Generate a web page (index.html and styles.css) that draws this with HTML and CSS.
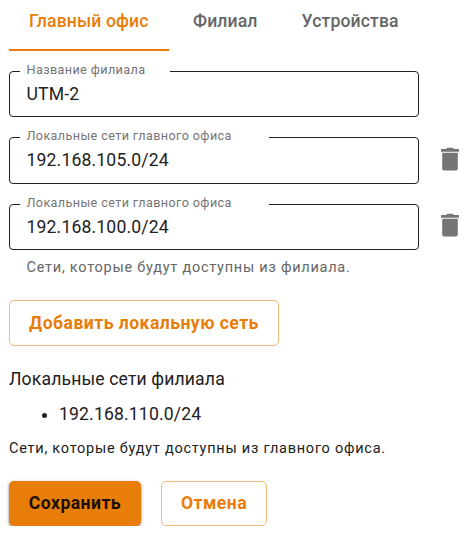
FILE: index.html
```html
<!DOCTYPE html>
<html lang="ru">
<head>
<meta charset="utf-8">
<title>Главный офис</title>
<link rel="stylesheet" href="styles.css">
</head>
<body>
<nav class="tabs">
  <a class="tab tab-active">Главный офис</a>
  <a class="tab">Филиал</a>
  <a class="tab">Устройства</a>
</nav>
<main class="form">
  <div class="row">
    <fieldset class="field field-name">
      <legend>Название филиала</legend>
      <div class="value">UTM-2</div>
    </fieldset>
  </div>
  <div class="row">
    <fieldset class="field field-tall">
      <legend>Локальные сети главного офиса</legend>
      <div class="value">192.168.105.0/24</div>
    </fieldset>
    <svg class="trash" viewBox="0 0 18 24"><path d="M0 2.1h5l1.3-1.3h5.4L13 2.1h5v2.6H0zM1.2 5.8h15.6v15.2a2.6 2.6 0 0 1-2.6 2.6H3.8A2.6 2.6 0 0 1 1.2 21z"/></svg>
  </div>
  <div class="row">
    <fieldset class="field">
      <legend>Локальные сети главного офиса</legend>
      <div class="value">192.168.100.0/24</div>
    </fieldset>
    <svg class="trash trash-last" viewBox="0 0 18 24"><path d="M0 2.1h5l1.3-1.3h5.4L13 2.1h5v2.6H0zM1.2 5.8h15.6v15.2a2.6 2.6 0 0 1-2.6 2.6H3.8A2.6 2.6 0 0 1 1.2 21z"/></svg>
  </div>
  <p class="hint">Сети, которые будут доступны из филиала.</p>
  <button class="btn btn-add">Добавить локальную сеть</button>
  <h2 class="title">Локальные сети филиала</h2>
  <ul class="nets"><li>192.168.110.0/24</li></ul>
  <p class="note">Сети, которые будут доступны из главного офиса.</p>
  <div class="actions">
    <button class="btn btn-save">Сохранить</button>
    <button class="btn btn-cancel">Отмена</button>
  </div>
</main>
</body>
</html>
```
FILE: styles.css
```css
* { box-sizing: border-box; }
body {
  margin: 0;
  background: #fff;
  color: #212121;
  font: 400 17.6px/24px Roboto, sans-serif;
  white-space: nowrap;
  overflow: hidden;
}
.tabs { display: flex; padding-left: 9px; height: 51px; }
.tab {
  padding: 9px 20px 0;
  height: 51px;
  font-weight: 500;
  letter-spacing: .14px;
  color: #666;
  border-bottom: 2px solid transparent;
}
.tab-active { width: 160px; color: #e87d0a; border-color: #e87d0a; }
.tab + .tab { padding-left: 24px; }
.form { padding: 13px 0 0 9px; }
.row { display: flex; align-items: flex-start; margin-bottom: 13px; }
.field {
  width: 410px;
  height: 53px;
  margin: 0;
  padding: 0 17px;
  border: 1px solid #212121;
  border-radius: 4px;
}
.field-tall { height: 54px; }
.field legend {
  width: 249px;
  height: 15px;
  margin-left: -7px;
  padding: 0 6.5px;
  font-size: 12.6px;
  line-height: 11px;
  letter-spacing: .4px;
  color: #757575;
}
.field-name legend { width: 150px; }
.value { line-height: 24px; margin: 3px 0 0 -.5px; letter-spacing: .15px; }
.trash { width: 18px; height: 24px; margin: 17px 0 0 22px; fill: #757575; }
.trash-last { margin-top: 16px; }
.hint {
  margin: -5px 0 22px 17.5px;
  font-size: 14.5px;
  line-height: 20px;
  letter-spacing: .75px;
  color: #666;
}
.btn {
  height: 46px;
  padding: 0;
  border: 1px solid #f4b878;
  border-radius: 5px;
  background: #fff;
  color: #e87d0a;
  font: 700 17.6px/24px Roboto, sans-serif;
  letter-spacing: .45px;
}
.btn-add { display: block; width: 270px; }
.title { margin: 21px 0 11px; font-size: 17.6px; line-height: 24px; font-weight: 400; letter-spacing: .14px; }
.nets { margin: 0 0 13px; padding-left: 50px; letter-spacing: .15px; }
.note { margin: 0 0 22px; font-size: 14.5px; line-height: 20px; letter-spacing: .75px; }
.actions { display: flex; gap: 20px; }
.btn-save {
  width: 132px;
  height: 45px;
  padding-bottom: 1px;
  border: 0;
  background: #e87d0a;
  color: #1a0e00;
  box-shadow: 0 1px 3px rgba(0, 0, 0, .5);
}
.btn-cancel { width: 106px; height: 45px; padding-bottom: 1px; }
```
